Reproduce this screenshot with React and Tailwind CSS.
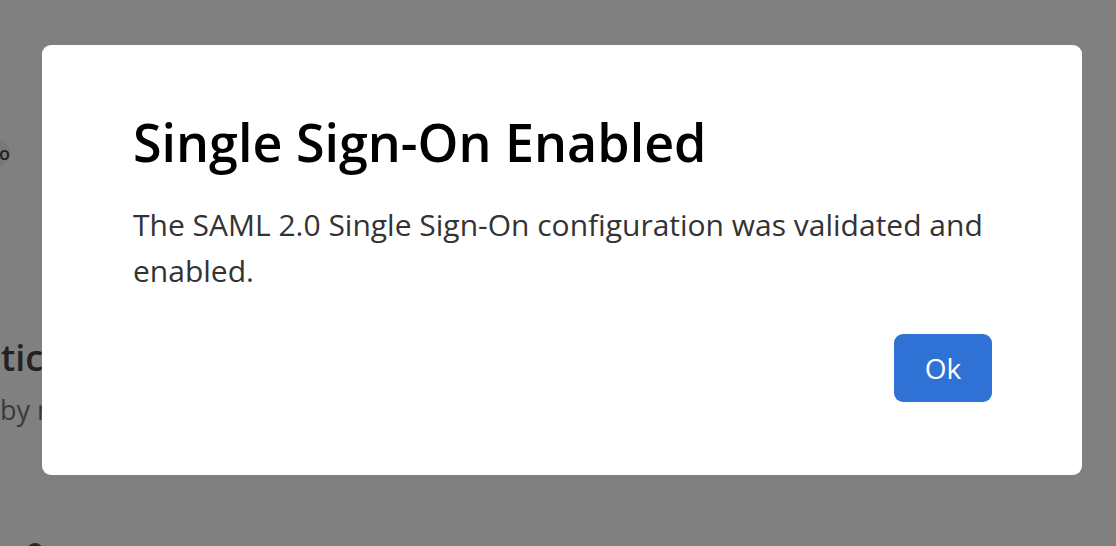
import React from 'react';

const App = () => {
    return (
        <div className="relative w-[1116px] h-[546px] overflow-hidden bg-[#808080] font-['Open_Sans',sans-serif]">
            {/* Page behind the overlay */}
            <div className="flex flex-col pt-[138px]">
                <div className="w-[30px] h-[30px] rounded-full bg-[#787878] flex items-center justify-end -ml-[20px]">
                    <span className="text-[18px] font-semibold text-[#222] leading-none">o</span>
                </div>
                <p className="mt-[172px] ml-[1px] text-[36px] font-semibold text-[#222] leading-none">tication</p>
                <p className="mt-[20px] text-[27px] text-[#3a3a3a] leading-none">by me</p>
                <div className="mt-[120px] ml-[27px] w-[16px] h-[16px] rounded-full bg-[#2a2a2a]"></div>
            </div>

            {/* Modal */}
            <div className="absolute left-[42px] top-[45px] w-[1040px] h-[430px] bg-white rounded-[9px] flex flex-col px-[91px] pt-[71px]">
                <h1 className="text-[52px] font-semibold text-black leading-none">
                    Single Sign-On Enabled
                </h1>
                <p className="mt-[34px] text-[30px] text-[#333] leading-[46px]">
                    The SAML 2.0 Single Sign-On configuration was validated and enabled.
                </p>
                <div className="flex justify-end mt-[40px] -mr-[1px]">
                    <button className="w-[98px] h-[68px] rounded-[9px] bg-[#2f71d5] text-white text-[28px] font-medium">
                        Ok
                    </button>
                </div>
            </div>
        </div>
    );
};

export default App;
